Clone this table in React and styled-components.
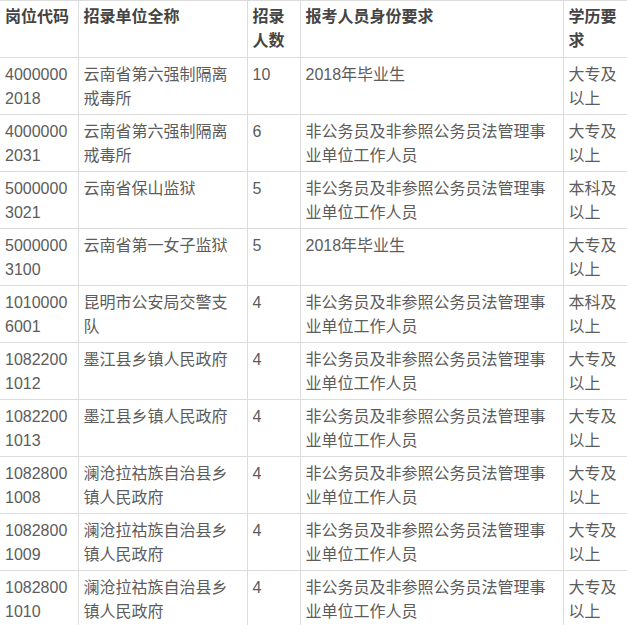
import React from 'react'
import styled, { createGlobalStyle } from 'styled-components'

const GlobalStyle = createGlobalStyle`
    body {
        margin: 0;
        background: #fff;
        font-family: "Liberation Sans", "Noto Sans CJK SC", sans-serif;
    }
`

const Table = styled.table`
    border-collapse: collapse;
    table-layout: fixed;
    width: 627px;
    font-size: 16px;
    line-height: 24px;
    color: #5c5c5c;
`

const Col = styled.col`
    width: ${props => props.w}px;
`

const Cell = styled.td`
    border: 1px solid #dcdcdc;
    padding: 5px 5px 2px 5px;
    vertical-align: top;
    height: 49px;
    &:first-child { border-left: none; }
    &:last-child { border-right: none; padding-right: 0; }
`

const HeadCell = styled(Cell).attrs({ as: 'th' })`
    padding-top: 4px;
    padding-bottom: 3px;
    text-align: left;
    font-weight: bold;
    color: #444;
`

const rows = [
    ['4000000 2018', '云南省第六强制隔离戒毒所', '10', '2018年毕业生', '大专及以上'],
    ['4000000 2031', '云南省第六强制隔离戒毒所', '6', '非公务员及非参照公务员法管理事业单位工作人员', '大专及以上'],
    ['5000000 3021', '云南省保山监狱', '5', '非公务员及非参照公务员法管理事业单位工作人员', '本科及以上'],
    ['5000000 3100', '云南省第一女子监狱', '5', '2018年毕业生', '大专及以上'],
    ['1010000 6001', '昆明市公安局交警支队', '4', '非公务员及非参照公务员法管理事业单位工作人员', '本科及以上'],
    ['1082200 1012', '墨江县乡镇人民政府', '4', '非公务员及非参照公务员法管理事业单位工作人员', '大专及以上'],
    ['1082200 1013', '墨江县乡镇人民政府', '4', '非公务员及非参照公务员法管理事业单位工作人员', '大专及以上'],
    ['1082800 1008', '澜沧拉祜族自治县乡镇人民政府', '4', '非公务员及非参照公务员法管理事业单位工作人员', '大专及以上'],
    ['1082800 1009', '澜沧拉祜族自治县乡镇人民政府', '4', '非公务员及非参照公务员法管理事业单位工作人员', '大专及以上'],
    ['1082800 1010', '澜沧拉祜族自治县乡镇人民政府', '4', '非公务员及非参照公务员法管理事业单位工作人员', '大专及以上'],
]

const App = () => {
    return (
        <>
            <GlobalStyle />
            <Table>
                <colgroup>
                    <Col w={78} />
                    <Col w={169} />
                    <Col w={53} />
                    <Col w={263} />
                    <Col w={64} />
                </colgroup>
                <thead>
                    <tr>
                        <HeadCell>岗位代码</HeadCell>
                        <HeadCell>招录单位全称</HeadCell>
                        <HeadCell>招录人数</HeadCell>
                        <HeadCell>报考人员身份要求</HeadCell>
                        <HeadCell>学历要求</HeadCell>
                    </tr>
                </thead>
                <tbody>
                    {rows.map((r, i) => (
                        <tr key={i}>
                            {r.map((c, j) => <Cell key={j}>{c}</Cell>)}
                        </tr>
                    ))}
                </tbody>
            </Table>
        </>
    )
}

export default App
